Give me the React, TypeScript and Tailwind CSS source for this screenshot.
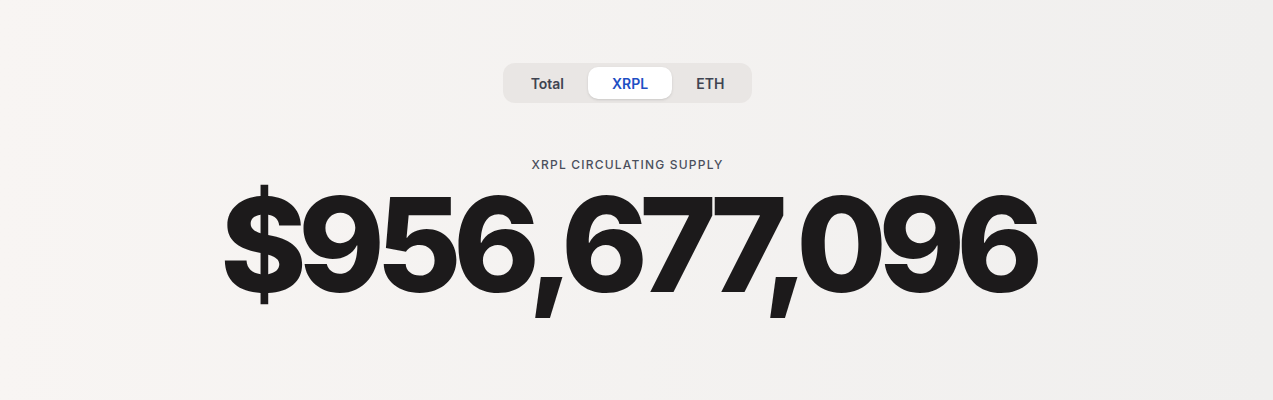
import { useState } from 'react';

const tabs = ['Total', 'XRPL', 'ETH'];

export default function App() {
  const [active, setActive] = useState('XRPL');

  return (
    <div
      className="min-h-[400px] w-full bg-gradient-to-r from-[#f8f5f3] to-[#f0efee] flex flex-col items-center pt-[63px] pr-[18px]"
      style={{ fontFamily: 'Inter, "Noto Sans", sans-serif' }}
    >
      <div className="flex p-1 rounded-xl bg-[#e9e6e4]">
        {tabs.map((t) => (
          <button
            key={t}
            onClick={() => setActive(t)}
            className={
              t === active
                ? 'h-8 px-6 rounded-[10px] bg-white text-[14px] font-semibold text-[#1e4fc4] shadow-sm'
                : 'h-8 px-6 rounded-[10px] text-[14px] font-semibold text-[#3f4451]'
            }
          >
            {t}
          </button>
        ))}
      </div>

      <p className="mt-[54px] text-[12px] leading-4 font-medium tracking-[0.1em] text-[#4a4f5c] uppercase">
        {active} Circulating Supply
      </p>

      <h1 className="mt-[6px] text-[131px] leading-none font-extrabold tracking-[-0.065em] text-[#1c1a1b]">
        $956,677,096
      </h1>
    </div>
  );
}
